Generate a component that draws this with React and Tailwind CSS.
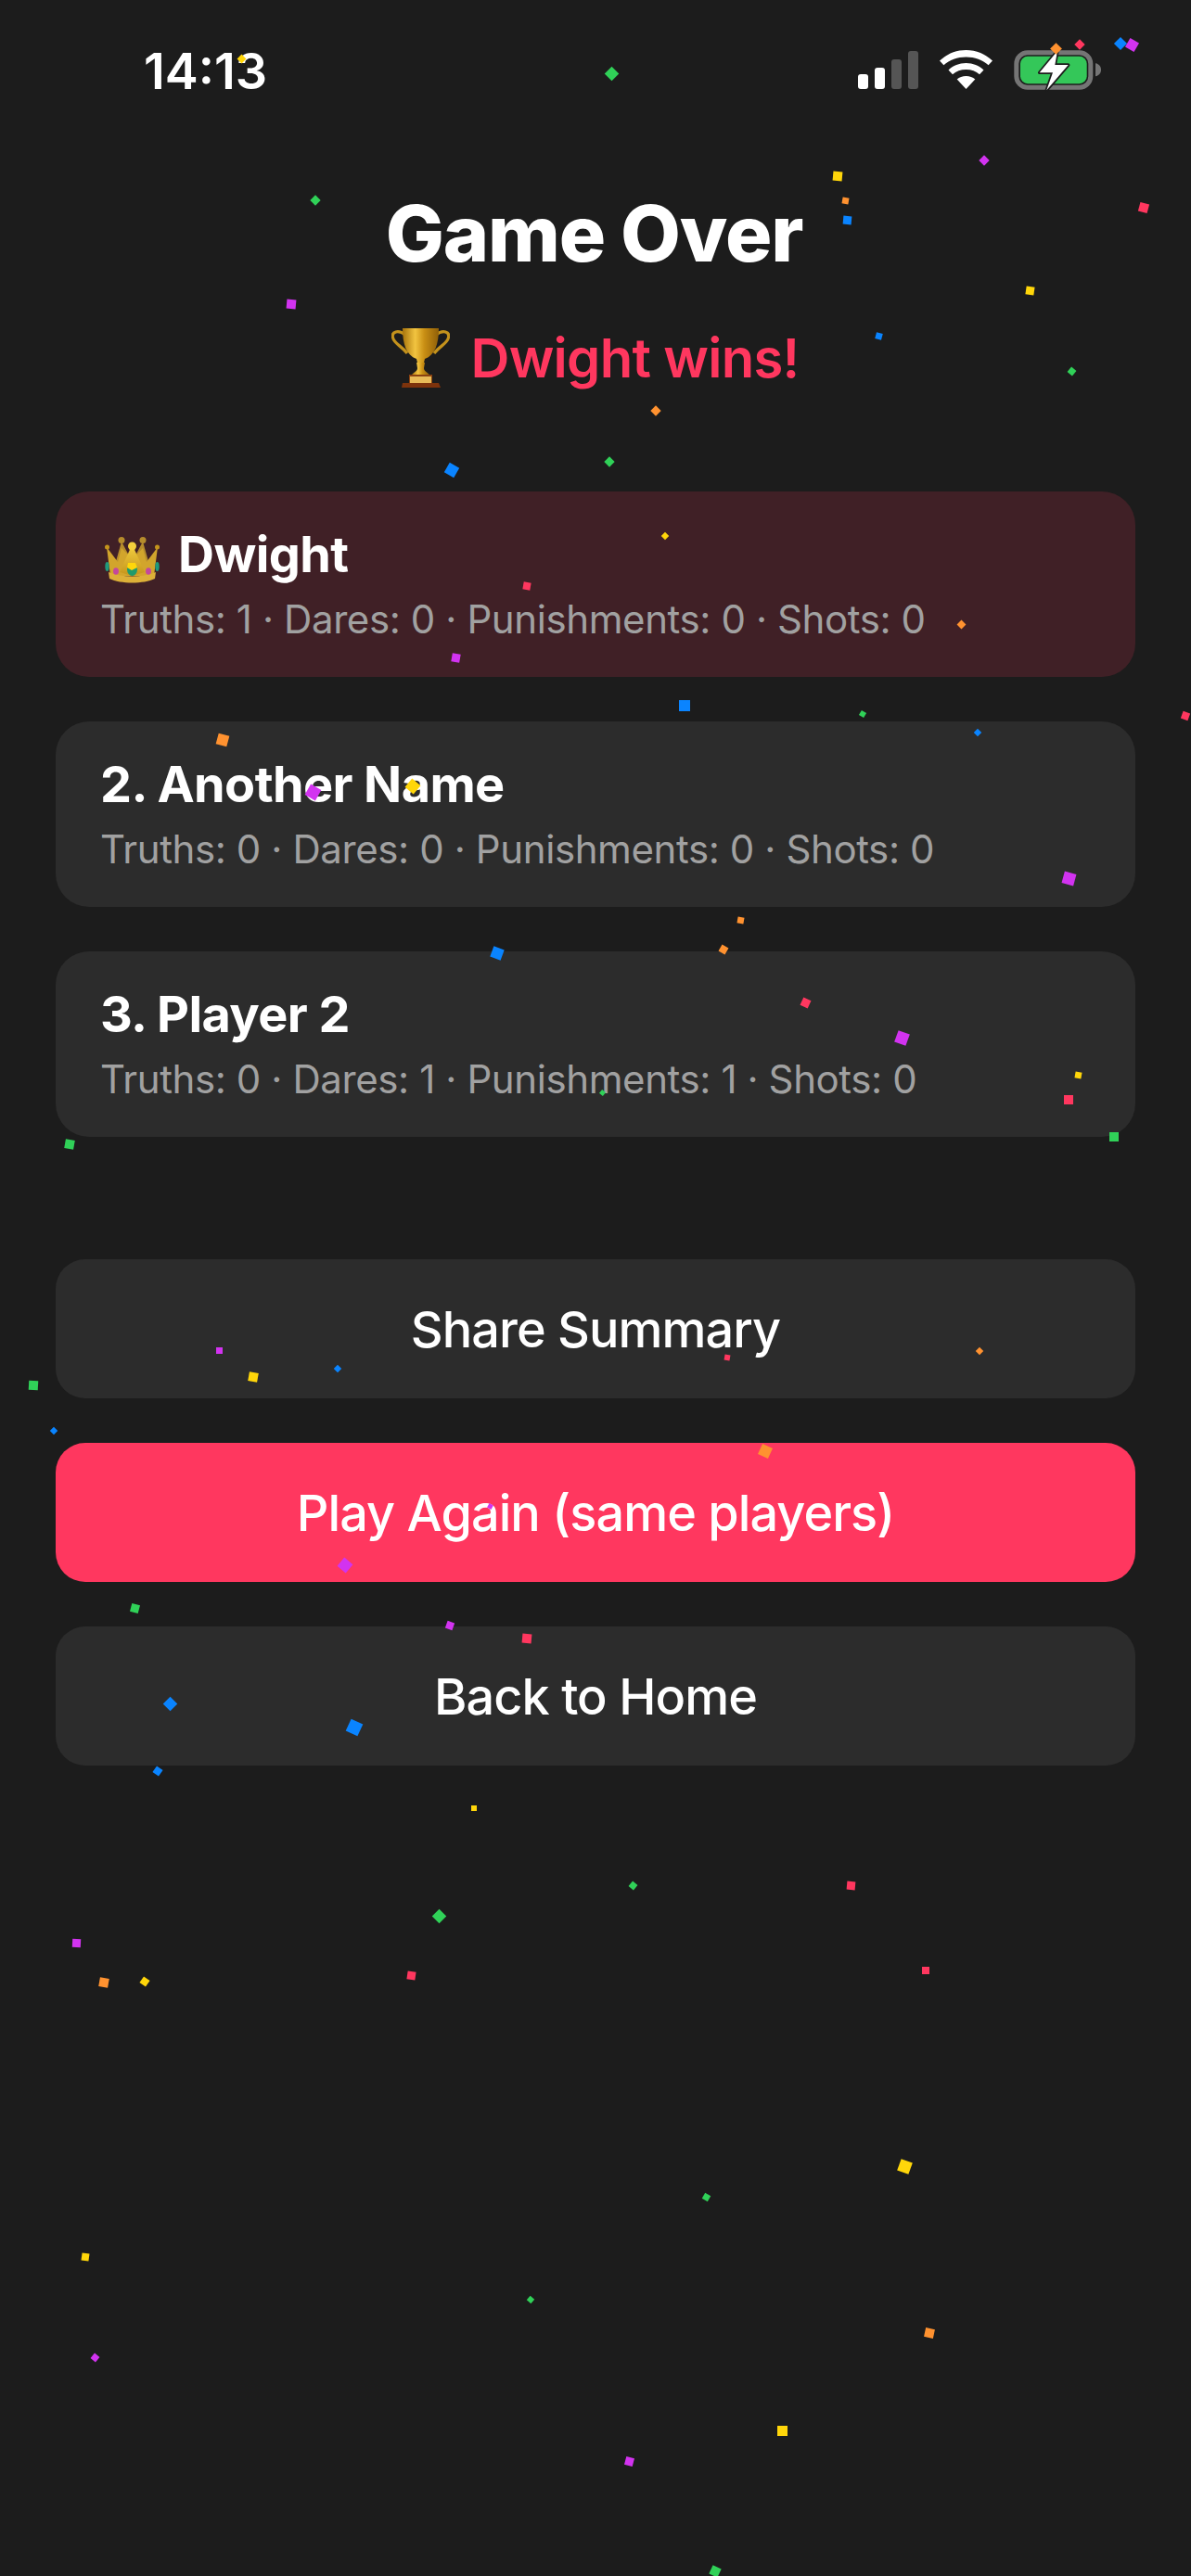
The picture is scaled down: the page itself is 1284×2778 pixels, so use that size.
import React from 'react';

const RED = '#ff375f';
const BLUE = '#0a84ff';
const GREEN = '#30d158';
const YELLOW = '#ffd60a';
const ORANGE = '#ff9230';
const PURPLE = '#d233f0';

// x, y (centre), side, rotation, colour
const confetti = [
  [260, 63, 7, 45, YELLOW], [659, 79, 11, 45, GREEN], [1061, 173, 8, 45, PURPLE], [903, 190, 10, 5, YELLOW],
  [911, 216, 7, 10, ORANGE], [913, 237, 9, 5, BLUE], [1233, 224, 10, 15, RED], [340, 216, 8, 45, GREEN],
  [314, 328, 10, 5, PURPLE], [1110, 313, 9, 8, YELLOW], [947, 362, 7, 15, BLUE], [1155, 400, 7, 40, GREEN],
  [707, 443, 8, 45, ORANGE], [657, 498, 8, 45, GREEN], [1138, 52, 9, 45, ORANGE], [1164, 48, 8, 45, RED],
  [1208, 47, 10, 45, BLUE], [1220, 48, 11, 30, PURPLE], [487, 507, 12, 30, BLUE], [717, 578, 6, 45, YELLOW],
  [568, 632, 8, 10, RED], [1036, 673, 7, 45, ORANGE], [491, 709, 9, 10, PURPLE], [738, 761, 12, 0, BLUE],
  [930, 770, 6, 30, GREEN], [1278, 772, 8, 20, RED], [240, 798, 12, 15, ORANGE], [1054, 790, 6, 45, BLUE],
  [337, 854, 13, 30, PURPLE], [445, 848, 12, 40, YELLOW], [1152, 947, 13, 15, PURPLE], [798, 992, 7, 10, ORANGE],
  [780, 1024, 8, 30, ORANGE], [536, 1028, 12, 20, BLUE], [868, 1081, 9, 25, RED], [972, 1119, 13, 20, PURPLE],
  [1162, 1159, 7, 10, YELLOW], [1152, 1186, 10, 0, RED], [649, 1178, 5, 40, GREEN], [1201, 1226, 10, 0, GREEN],
  [75, 1234, 10, 10, GREEN], [236, 1456, 7, 0, PURPLE], [273, 1485, 10, 10, YELLOW], [364, 1476, 6, 45, BLUE],
  [784, 1464, 6, 10, RED], [1056, 1457, 6, 45, ORANGE], [36, 1494, 10, 3, GREEN], [58, 1543, 6, 45, BLUE],
  [825, 1565, 12, 25, ORANGE], [528, 1624, 5, 30, PURPLE], [372, 1688, 12, 40, PURPLE], [145, 1734, 9, 15, GREEN],
  [485, 1753, 8, 20, PURPLE], [568, 1767, 10, 5, RED], [183, 1837, 11, 45, BLUE], [382, 1863, 14, 25, BLUE],
  [170, 1910, 8, 35, BLUE], [511, 1950, 6, 0, YELLOW], [682, 2033, 7, 40, GREEN], [917, 2033, 9, 5, RED],
  [473, 2066, 11, 45, GREEN], [82, 2095, 9, 3, PURPLE], [112, 2138, 10, 10, ORANGE], [156, 2137, 8, 35, YELLOW],
  [443, 2130, 9, 8, RED], [998, 2125, 8, 0, RED], [975, 2336, 13, 20, YELLOW], [761, 2369, 7, 30, GREEN],
  [92, 2434, 8, 8, YELLOW], [572, 2480, 6, 40, GREEN], [1002, 2516, 10, 12, ORANGE], [102, 2542, 7, 40, PURPLE],
  [843, 2621, 11, 0, YELLOW], [678, 2654, 9, 15, PURPLE], [771, 2773, 10, 25, GREEN],
];

const players = [
  { name: 'Dwight', stats: 'Truths: 1 · Dares: 0 · Punishments: 0 · Shots: 0', winner: true },
  { name: '2. Another Name', stats: 'Truths: 0 · Dares: 0 · Punishments: 0 · Shots: 0' },
  { name: '3. Player 2', stats: 'Truths: 0 · Dares: 1 · Punishments: 1 · Shots: 0' },
];

function Trophy() {
  return (
    <svg width="63" height="66" viewBox="0 0 63 66" className="shrink-0">
      <defs>
        <linearGradient id="cup" x1="0" x2="1" y1="0" y2="0">
          <stop offset="0" stopColor="#a8740c" />
          <stop offset="0.35" stopColor="#f2c440" />
          <stop offset="0.6" stopColor="#c98f14" />
          <stop offset="1" stopColor="#8f5f08" />
        </linearGradient>
      </defs>
      <path d="M15 8 C7 2 0 5 1.5 11 C3 18 10 19 17 28" fill="none" stroke="#c4921c" strokeWidth="3.2" />
      <path d="M48 8 C56 2 63 5 61.5 11 C60 18 53 19 46 28" fill="none" stroke="#c4921c" strokeWidth="3.2" />
      <path d="M12 1 H51 C51 18 47 30 36 34 L35 38 H28 L27 34 C16 30 12 18 12 1Z" fill="url(#cup)" />
      <path d="M27 38 H36 L35 44 C35 47 38 48 41 51 H22 C25 48 28 47 28 44Z" fill="url(#cup)" />
      <path d="M19 51 H44 V60 H19Z" fill="#8a4312" />
      <path d="M20 53 H43 V60 H20Z" fill="#e8bb58" />
      <path d="M12 60 H51 L53 65 H11Z" fill="#7d330c" />
    </svg>
  );
}

function Crown() {
  return (
    <svg width="59" height="50" viewBox="0 0 59 50" className="ml-[5px] mt-[12px] shrink-0">
      <defs>
        <linearGradient id="crown" x1="0" x2="0" y1="0" y2="1">
          <stop offset="0" stopColor="#f4d040" />
          <stop offset="1" stopColor="#c4941c" />
        </linearGradient>
      </defs>
      <path d="M18 5 L11 30 H48 L41 5 L33 20 H26Z" fill="#b68c2c" />
      <path d="M2 11 L6 42 H53 L57 11 L45 27 L41 12 L30 24 L18 12 L14 27Z" fill="#d2a52c" />
      <path d="M29.5 8 L43 38 L29.5 42 L16 38Z" fill="url(#crown)" />
      <path d="M4 38 C18 44 41 44 55 38 L54 45 C42 51 17 51 5 45Z" fill="#dcb038" />
      <circle cx="18" cy="3.5" r="3.5" fill="#b68c2c" />
      <circle cx="41" cy="3.5" r="3.5" fill="#b68c2c" />
      <circle cx="29.5" cy="10" r="4.5" fill="#f4cf3c" />
      <circle cx="2.5" cy="11" r="2.5" fill="#c4941c" />
      <circle cx="56.5" cy="11" r="2.5" fill="#c4941c" />
      <ellipse cx="2.5" cy="32" rx="2.2" ry="5" fill="#1f9a7c" />
      <ellipse cx="56.5" cy="32" rx="2.2" ry="5" fill="#1f9a7c" />
      <ellipse cx="12" cy="37" rx="3" ry="3.8" fill="#c4489c" />
      <ellipse cx="47" cy="37" rx="3" ry="3.8" fill="#c4489c" />
      <ellipse cx="29.5" cy="35" rx="5.5" ry="7" fill="#1f9a6c" />
      <path d="M25 28 H33 L35 33 L29 36 L24 33Z" fill="#ffd60a" />
    </svg>
  );
}

function StatusIcons() {
  return (
    <div className="flex items-center">
      <div className="flex items-end gap-[7px] h-[41px]">
        <div className="w-[11px] h-[16px] rounded-[3px] bg-white" />
        <div className="w-[11px] h-[23px] rounded-[3px] bg-white" />
        <div className="w-[11px] h-[32px] rounded-[3px] bg-[#555555]" />
        <div className="w-[11px] h-[41px] rounded-[3px] bg-[#555555]" />
      </div>
      <svg width="57" height="42" viewBox="0 0 57 42" className="ml-[23px]">
        <path fill="#fff" d="M28.5 0 C17.5 0 7.5 4.3 0 11.6 L4.4 16.2 C10.8 10.4 19.2 7.4 28.5 7.4 C37.8 7.4 46.2 10.4 52.6 16.2 L57 11.6 C49.5 4.3 39.5 0 28.5 0Z" />
        <path fill="#fff" d="M28.5 14 C21 14 14.5 16.8 9.5 21.4 L14 26.2 C17.8 22.9 22.8 21 28.5 21 C34.2 21 39.2 22.9 43 26.2 L47.5 21.4 C42.5 16.8 36 14 28.5 14Z" />
        <path fill="#fff" d="M28.5 28 C24.6 28 21.2 29.3 18.7 31.6 L28.5 42 L38.3 31.6 C35.8 29.3 32.4 28 28.5 28Z" />
      </svg>
      <svg width="100" height="50" viewBox="0 0 100 50" className="ml-[20px]">
        <rect x="5.8" y="6.8" width="80" height="37.5" rx="12" fill="none" stroke="#757575" strokeWidth="5" />
        <rect x="10" y="10.8" width="71.7" height="29.4" rx="8" fill="#34c759" />
        <path d="M91 18.3 C95 19 97 22 97 25.3 C97 28.6 95 31.6 91 32.3Z" fill="#757575" />
        <path d="M50 5 L30.7 28.3 H45 L38.3 47.3 L61.7 20 H47.3Z" fill="#fff" stroke="#1c1c1c" strokeWidth="3.5" strokeLinejoin="round" paintOrder="stroke" />
      </svg>
    </div>
  );
}

function PlayerCard({ name, stats, winner }) {
  return (
    <div className={winner ? 'h-[200px] rounded-[36px] bg-[#402026] px-[48px] pt-[34px]' : 'h-[200px] rounded-[36px] bg-[#2c2c2c] px-[48px] pt-[34px]'}>
      <div className="flex items-center gap-[20px] text-[54px] leading-[68px] font-[650] tracking-[-0.6px] text-white">
        {winner && <Crown />}
        <span>{name}</span>
      </div>
      <div className="mt-[8px] text-[42px] leading-[56px] tracking-[-0.4px] text-[#a1a1a1]">{stats}</div>
    </div>
  );
}

function ActionButton({ children, primary }) {
  return (
    <button className={primary ? 'flex h-[150px] w-full items-center justify-center rounded-[32px] bg-[#ff375f] text-[54px] font-[550] tracking-[-0.95px] text-white' : 'flex h-[150px] w-full items-center justify-center rounded-[32px] bg-[#2c2c2c] text-[54px] font-[550] tracking-[-0.95px] text-white'}>
      {children}
    </button>
  );
}

export default function App() {
  return (
    <div className="relative h-[2778px] w-full overflow-hidden bg-[#1c1c1c] font-['Inter',sans-serif]">
      <div className="flex h-[202px] items-start justify-between pl-[155px] pr-[94px] pt-[45px]">
        <span className="text-[54px] leading-[64px] font-semibold text-white">14:13</span>
        <div className="pt-[5px]">
          <StatusIcons />
        </div>
      </div>

      <h1 className="pr-[3px] text-center text-[84px] leading-[100px] font-extrabold tracking-[-1.2px] text-white">Game Over</h1>

      <div className="mt-[44px] flex h-[80px] items-center justify-center gap-[22px]">
        <Trophy />
        <span className="text-[58px] font-semibold tracking-[-0.7px] text-[#ff375f]">Dwight wins!</span>
      </div>

      <div className="mt-[104px] flex flex-col gap-[48px] px-[60px]">
        {players.map((p) => (
          <PlayerCard key={p.name} {...p} />
        ))}
      </div>

      <div className="mt-[132px] flex flex-col gap-[48px] px-[60px]">
        <ActionButton>Share Summary</ActionButton>
        <ActionButton primary>Play Again (same players)</ActionButton>
        <ActionButton>Back to Home</ActionButton>
      </div>

      {/* confetti sits above everything */}
      <div className="pointer-events-none absolute inset-0">
        {confetti.map(([x, y, s, r, c], i) => (
          <div
            key={i}
            className="absolute"
            style={{ left: x - s / 2, top: y - s / 2, width: s, height: s, background: c, transform: `rotate(${r}deg)` }}
          />
        ))}
      </div>
    </div>
  );
}
